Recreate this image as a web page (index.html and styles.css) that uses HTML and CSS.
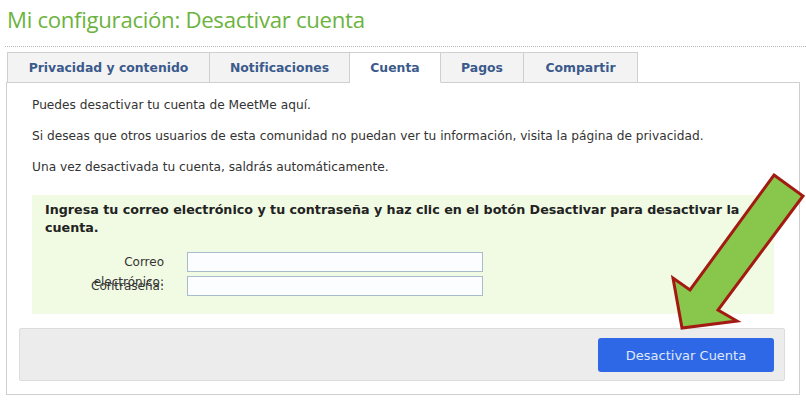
FILE: index.html
```html
<!DOCTYPE html>
<html lang="es">
<head>
    <meta charset="UTF-8">
    <meta name="viewport" content="width=device-width, initial-scale=1.0">
    <title>Mi configuración: Desactivar cuenta</title>
    <link rel="stylesheet" href="styles.css">
</head>
<body>
    <h1 class="title">Mi configuración: Desactivar cuenta</h1>
    <div class="rule"></div>

    <ul class="tabs">
        <li class="tab tab-privacy">Privacidad y contenido</li>
        <li class="tab tab-notif">Notificaciones</li>
        <li class="tab tab-account active">Cuenta</li>
        <li class="tab tab-pay">Pagos</li>
        <li class="tab tab-share">Compartir</li>
    </ul>

    <div class="panel">
        <div class="intro">
            <p>Puedes desactivar tu cuenta de MeetMe aquí.</p>
            <p>Si deseas que otros usuarios de esta comunidad no puedan ver tu información, visita la página de privacidad.</p>
            <p>Una vez desactivada tu cuenta, saldrás automáticamente.</p>
        </div>

        <form class="deactivate">
            <p class="hint">Ingresa tu correo electrónico y tu contraseña y haz clic en el botón Desactivar para desactivar la cuenta.</p>
            <div class="field">
                <label for="email">Correo electrónico:</label>
                <input type="text" id="email">
            </div>
            <div class="field">
                <label for="pass">Contraseña:</label>
                <input type="password" id="pass">
            </div>
        </form>

        <div class="actions">
            <button class="btn">Desactivar Cuenta</button>
        </div>
    </div>

    <!-- flecha encima de todo -->
    <svg class="arrow" viewBox="0 0 806 400" width="806" height="400">
        <polygon points="774,175 803,196 718,310 737,321 682,328 673,278 690,290"
                 fill="#88c64c" stroke="#a31a12" stroke-width="3" stroke-linejoin="miter"/>
    </svg>
</body>
</html>
```

FILE: styles.css
```css
body {
    margin: 0;
    background: #fff;
    font-family: "DejaVu Sans", Verdana, sans-serif;
    color: #333;
    position: relative;
    width: 806px;
    height: 400px;
    overflow: hidden;
}

.title {
    margin: 5px 0 0 7px;
    font-family: "Open Sans", "Noto Sans", sans-serif;
    font-weight: 400;
    font-size: 22.2px;
    line-height: 30px;
    color: #6cb33e;
    letter-spacing: -0.3px;
}

.rule {
    margin: 11px 0 0 5px;
    border-top: 1px dotted #b8b8b8;
}

.tabs {
    list-style: none;
    display: flex;
    margin: 5px 0 -1px 7px;
    padding: 0;
    position: relative;
    z-index: 1;
}

.tab {
    box-sizing: border-box;
    height: 31px;
    border: 1px solid #cfcfcf;
    border-left: none;
    background: #f3f3f3;
    color: #3b5a8c;
    font-weight: bold;
    font-size: 12.4px;
    line-height: 29px;
    text-align: center;
}

.tab:first-child {
    border-left: 1px solid #cfcfcf;
}

.tab.active {
    background: #fff;
    border-bottom-color: #fff;
}

.tab-privacy { width: 203px; }
.tab-notif { width: 140px; }
.tab-account { width: 91px; }
.tab-pay { width: 83px; }
.tab-share { width: 114px; }

.panel {
    box-sizing: border-box;
    height: 313px;
    margin: 0 6px;
    border: 1px solid #cfcfcf;
    padding-top: 14px;
}

.intro {
    padding-left: 25px;
    font-size: 12.2px;
}

.intro p {
    margin: 0 0 15px;
    line-height: 16px;
}

.intro p:last-child {
    margin-bottom: 20px;
}

.deactivate {
    box-sizing: border-box;
    margin: 0 25px 0 25px;
    height: 119px;
    background: #f1fbe3;
    padding: 6px 14px 0 13px;
}

.hint {
    margin: 0 0 15px;
    font-weight: bold;
    font-size: 12.7px;
    line-height: 18px;
    color: #222;
}

.field {
    display: flex;
    height: 24px;
    padding-left: 41px;
}

.field label {
    width: 78px;
    margin-right: 23px;
    text-align: right;
    font-size: 12px;
    line-height: 20px;
    color: #333;
}

.field input {
    box-sizing: border-box;
    width: 296px;
    height: 20px;
    margin: 0;
    border: 1px solid #a9bccb;
    background: #fcfdfe;
    padding: 0 3px;
}

.actions {
    box-sizing: border-box;
    display: flex;
    justify-content: flex-end;
    margin: 14px 14px 0 12px;
    height: 53px;
    padding: 9px 10px 0 0;
    background: #ececec;
    border: 1px solid #dcdcdc;
    border-radius: 2px;
}

.btn {
    width: 176px;
    height: 34px;
    border: none;
    border-radius: 3px;
    background: #2f68e6;
    color: #dfe8fa;
    font-family: "DejaVu Sans", Verdana, sans-serif;
    font-size: 13px;
    cursor: pointer;
}

.arrow {
    position: absolute;
    top: 0;
    left: 0;
    pointer-events: none;
}
```
